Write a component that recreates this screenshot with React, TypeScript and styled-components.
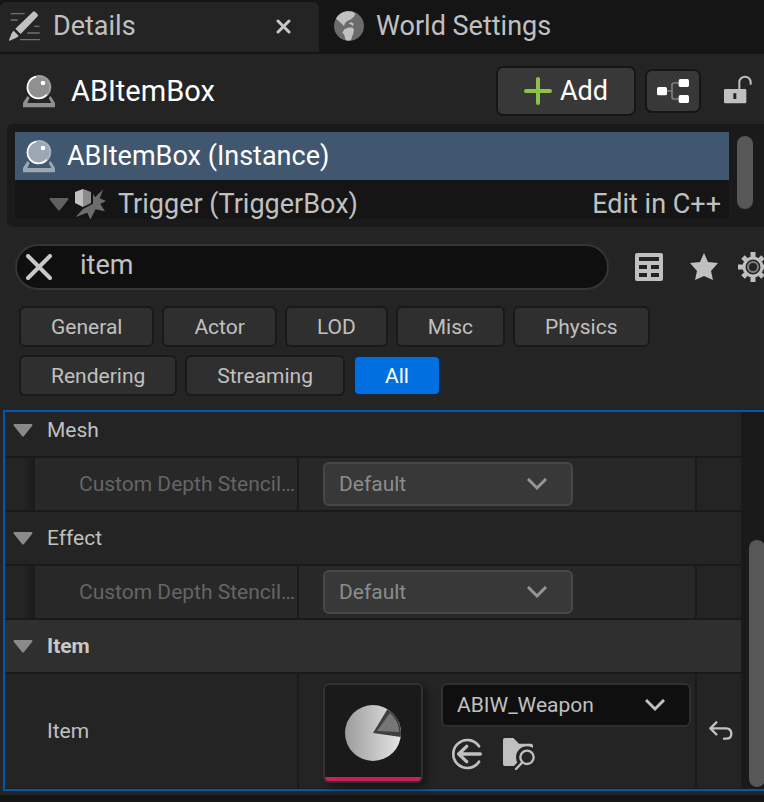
import React, { useState } from "react";
import styled, { createGlobalStyle } from "styled-components";

const GlobalStyle = createGlobalStyle`
  *, *::before, *::after { box-sizing: border-box; }
  body { margin: 0; background: #151515; overflow: hidden; }
  button, input, select { font: inherit; color: inherit; margin: 0; }
  svg { display: block; flex: none; }
`;

const Page = styled.div`
  min-height: 100vh;
  background: #151515;
  color: #c0c0c0;
  font-family: Roboto, "Liberation Sans", sans-serif;
  font-size: 27px;
  line-height: 32px;
`;

const TabBar = styled.nav`
  display: flex;
  height: 54px;
  padding: 2px 0;
`;

const Tab = styled.div<{ $active?: boolean }>`
  display: flex;
  align-items: center;
  width: ${(p) => (p.$active ? "319px" : "auto")};
  padding: 0 28px 2px ${(p) => (p.$active ? "8px" : "14px")};
  border-radius: 6px 6px 0 0;
  background: ${(p) => (p.$active ? "#242424" : "transparent")};
`;

const PlainButton = styled.button`
  display: flex;
  align-items: center;
  padding: 0;
  border: 0;
  background: none;
  cursor: pointer;
`;

const TabButton = styled(PlainButton)`
  flex: 1;
  gap: 11px;
  white-space: nowrap;
`;

const Body = styled.main`
  background: #242424;
  padding-bottom: 4px;
`;

const Header = styled.header`
  display: flex;
  align-items: center;
  height: 70px;
  padding: 4px 11px 0 22px;
`;

const Title = styled.h1`
  flex: 1;
  margin: 0 0 0 15px;
  font-size: 29px;
  font-weight: 400;
  color: #fff;
`;

const ToolButton = styled(PlainButton)<{ $wide?: boolean }>`
  justify-content: center;
  gap: 8px;
  width: ${(p) => (p.$wide ? "140px" : "56px")};
  height: ${(p) => (p.$wide ? "50px" : "44px")};
  margin-right: ${(p) => (p.$wide ? "9px" : "22px")};
  border: 2px solid #161616;
  border-radius: 7px;
  background: #383838;
  color: #fff;
`;

const TreePanel = styled.section`
  display: flex;
  height: 103px;
  margin-left: 7px;
  padding: 8px 11px 8px 8px;
  border-radius: 6px 0 0 6px;
  background: #1a1a1a;
`;

const TreeRows = styled.div`
  flex: 1;
  overflow: hidden;
  background: #151515;
`;

const TreeRow = styled.div<{ $selected?: boolean }>`
  display: flex;
  align-items: center;
  height: 48px;
  padding: 0 8px 0 ${(p) => (p.$selected ? "7px" : "34px")};
  background: ${(p) => (p.$selected ? "#40576f" : "transparent")};
  color: ${(p) => (p.$selected ? "#fff" : "#c0c0c0")};
`;

const TreeName = styled.span`
  flex: 1;
  margin-left: 11px;
`;

const TreeIcon = styled.span`
  margin-left: 5px;
`;

const TreeLink = styled.a`
  color: #c0c0c0;
  text-decoration: none;
`;

const TreeThumb = styled.div`
  width: 16px;
  height: 73px;
  margin: 4px 0 0 8px;
  border-radius: 8px;
  background: #575757;
`;

const SearchRow = styled.div`
  display: flex;
  align-items: center;
  padding: 17px 0 0 15px;
  overflow: hidden;
`;

const SearchBox = styled.div`
  display: flex;
  flex: 1;
  align-items: center;
  height: 46px;
  margin-right: 26px;
  padding: 0 24px 0 9px;
  border: 2px solid #353535;
  border-radius: 23px;
  background: #0f0f0f;
`;

const SearchInput = styled.input`
  flex: 1;
  min-width: 0;
  height: 36px;
  margin: 0 0 4px 28px;
  padding: 0;
  border: 0;
  outline: 0;
  background: none;
`;

const SearchTools = styled.div`
  display: grid;
  grid-template-columns: 54px 48px 32px;
  align-items: center;
  margin-right: -5px;
`;

const Chips = styled.div`
  display: flex;
  flex-wrap: wrap;
  gap: 8px;
  padding: 16px 100px 14px 19px;
`;

const Chip = styled.button<{ $on: boolean }>`
  height: 41px;
  padding: 0 30px;
  border: 2px solid ${(p) => (p.$on ? "#17253a" : "#191919")};
  border-radius: 6px;
  background: ${(p) => (p.$on ? "#0070e0" : "#2f2f2f")};
  color: ${(p) => (p.$on ? "#fff" : "#c0c0c0")};
  font-size: 21px;
  line-height: 24px;
  cursor: pointer;
`;

const DetailsFrame = styled.section`
  display: flex;
  margin-left: 3px;
  border: 2px solid #0457ae;
  border-right: 0;
  background: #1a1a1a;
  font-size: 21px;
  line-height: 24px;
`;

const Rows = styled.div`
  display: flex;
  flex: 1;
  flex-direction: column;
  gap: 2px;
  min-width: 0;
  padding-bottom: 1px;
`;

const ScrollTrack = styled.div`
  display: flex;
  flex-direction: column;
  justify-content: flex-end;
  width: 23px;
  padding: 0 0 2px 8px;
  overflow: hidden;
`;

const ScrollThumb = styled.div`
  width: 16px;
  height: 66%;
  border-radius: 8px;
  background: #575757;
`;

const Category = styled.button<{ $strong?: boolean; $first?: boolean }>`
  display: flex;
  align-items: center;
  gap: 14px;
  height: ${(p) => (p.$first ? "44px" : "52px")};
  padding: 0 8px ${(p) => (p.$first ? "8px" : "0")};
  border: 0;
  background: ${(p) => (p.$strong ? "#2f2f2f" : "#242424")};
  color: ${(p) => (p.$strong ? "#c8c8c8" : "#c0c0c0")};
  font-weight: ${(p) => (p.$strong ? 700 : 400)};
  text-align: left;
  cursor: pointer;
`;

const Property = styled.div<{ $nested?: boolean }>`
  display: grid;
  grid-template-columns: ${(p) => (p.$nested ? "30px 264px" : "294px")} minmax(0, 1fr) 44px;
  min-height: ${(p) => (p.$nested ? "52px" : "114px")};
`;

const Indent = styled.div`
  background: linear-gradient(to right, #242424 60%, #1a1a1a);
`;

const Cell = styled.div<{ $tone?: string }>`
  display: flex;
  align-items: center;
  min-width: 0;
  background: ${(p) => p.$tone ?? "#242424"};
  margin-right: 2px;
  &:last-child { margin-right: 0; padding-left: 4px; justify-content: center; }
`;

const PropertyLabel = styled.label<{ $dim?: boolean }>`
  padding-left: ${(p) => (p.$dim ? "44px" : "42px")};
  color: ${(p) => (p.$dim ? "#656565" : "#c0c0c0")};
  white-space: nowrap;
`;

const Value = styled(Cell)`
  padding: 0 5px 0 24px;
`;

const AssetValue = styled(Value)`
  align-items: flex-start;
  gap: 18px;
  padding-top: 9px;
`;

const Combo = styled.div`
  position: relative;
  width: 250px;
  svg { position: absolute; top: 16px; right: 26px; pointer-events: none; }
`;

const Select = styled.select<{ $dark?: boolean }>`
  display: block;
  width: 100%;
  height: 44px;
  padding: 0 48px 0 14px;
  border: 2px solid ${(p) => (p.$dark ? "#303030" : "#474747")};
  border-radius: 6px;
  background: ${(p) => (p.$dark ? "#0f0f0f" : "#383838")};
  color: ${(p) => (p.$dark ? "#c0c0c0" : "#8c8c8c")};
  opacity: 1;
  appearance: none;
`;

const Thumbnail = styled.div`
  display: flex;
  flex: none;
  align-items: center;
  justify-content: center;
  width: 100px;
  height: 100px;
  border: 2px solid #303030;
  border-radius: 6px;
  background: linear-gradient(to top, #cc1f57 4px, #1a1a1a 4px);
  box-shadow: 4px 4px 6px #151515;
`;

const AssetColumn = styled.div`
  display: flex;
  flex: 1;
  flex-direction: column;
  gap: 10px;
  max-width: 250px;
`;

const AssetActions = styled.div`
  display: flex;
  gap: 19px;
  padding-left: 10px;
`;

const Ball = ({ light }: { light?: boolean }) => (
  <svg width="34" height="34" viewBox="66 222 102 102">
    <path
      fill={light ? "#9ba7b3" : "#909090"}
      fillRule="evenodd"
      d="M82 288 69 309v13h96v-13l-13-21-6 6 8 15H82l7-15z"
    />
    <circle cx="118" cy="261" r="36" fill={light ? "#9ba7b3" : "#909090"} />
    <circle cx="117" cy="261" r="33" fill="none" stroke={light ? "#c2cad2" : "#b8b8b8"} strokeWidth="2" />
    <path d="M108 230A33 33 0 1 0 140 284" fill="none" stroke="#fff" strokeWidth="5" />
    <circle cx="129" cy="249" r="7" fill="#fff" />
  </svg>
);

const PencilIcon = () => (
  <svg width="34" height="34" viewBox="24 24 102 102">
    <path d="M32 38h42M32 57h21M103 76h15M82 96h37M60 116h60" stroke="#707070" strokeWidth="4" />
    <path
      fill="#c0c0c0"
      d="M99 32q3-3 6 0l8 8q2 3 0 6L62 99 46 83zM41 89l15 15q-3 4-7 6l-20 9q-3 1-2-2l8-20q2-4 6-8z"
    />
  </svg>
);

const GlobeIcon = () => (
  <svg width="32" height="32" viewBox="999 27 96 96">
    <circle cx="1047" cy="75" r="45" fill="#6b6b6b" />
    <path
      fill="#c0c0c0"
      d="M1008 53c7-14 22-22 38-22 11 0 17 4 20 8l-5 9-8 7q-5 4-11 5l-7 7-3 8-10-10zM1033 85l11-5 13-1 5 7-2 11-7 20q-9 3-16 0l-4-15-6-7z"
    />
    <path fill="#c0c0c0" d="M1053 63l8 5-2 8-4-5-9-3z" />
  </svg>
);

const Cross = ({ size, weight }: { size: number; weight: number }) => (
  <svg width={size} height={size} viewBox={`0 0 ${size} ${size}`}>
    <path
      d={`M2 2 ${size - 2} ${size - 2}M${size - 2} 2 2 ${size - 2}`}
      stroke="#c8c8c8"
      strokeWidth={weight}
      strokeLinecap="round"
    />
  </svg>
);

const PlusIcon = () => (
  <svg width="28" height="28" viewBox="0 0 28 28">
    <path d="M14 2v24M2 14h24" stroke="#8bc34a" strokeWidth="4" strokeLinecap="round" />
  </svg>
);

const NodesIcon = () => (
  <svg width="34" height="26" viewBox="822 234 102 78">
    <path d="M855 273h15M892 249h-16q-6 0-6 6v36q0 6 6 6h16" fill="none" stroke="#808080" strokeWidth="5" />
    <g fill="#fff">
      <rect x="825" y="261" width="30" height="25" rx="5" />
      <rect x="890" y="237" width="31" height="24" rx="5" />
      <rect x="890" y="285" width="31" height="24" rx="5" />
    </g>
  </svg>
);

const UnlockIcon = () => (
  <svg width="30" height="34" viewBox="1026 222 90 102">
    <path
      fill="#c0c0c0"
      fillRule="evenodd"
      d="M1033 267h59q4 0 4 4v35q0 4-4 4h-59q-4 0-4-4v-35q0-4 4-4zM1057 280v17h9v-17z"
    />
    <path d="M1075 268v-21a17 17 0 0 1 34 0v7" fill="none" stroke="#c0c0c0" strokeWidth="6" />
  </svg>
);

const TriggerIcon = () => (
  <svg width="33" height="33" viewBox="222 202 99 99">
    <path
      fill="#6c6c6c"
      d="M279 219v30l-30 16-22 24 35-13 9 21 16-31 28 6-14-22 17-9-19-8 11-27-25 24z"
    />
    <path fill="#c0c0c0" d="M225 214l24-9v54l-24-12z" />
    <path fill="#8c8c8c" d="M249 205l24 9v33l-24 12z" />
  </svg>
);

const Arrow = ({ color = "#8a8a8a" }: { color?: string }) => (
  <svg width="20" height="13" viewBox="0 0 20 13">
    <path d="M1 0h18q1 1 0 2l-8 10q-1 1-2 0L1 2q-1-1 0-2z" fill={color} />
  </svg>
);

const TableIcon = () => (
  <svg width="28" height="28" viewBox="0 0 28 28">
    <path
      fill="#c0c0c0"
      fillRule="evenodd"
      d="M2 0h24q2 0 2 2v24q0 2-2 2H2q-2 0-2-2V2q0-2 2-2zM4 4v4h20V4zM4 12v4h8v-4zM16 12v4h8v-4zM4 20v4h8v-4zM16 20v4h8v-4z"
    />
  </svg>
);

const StarIcon = () => (
  <svg width="30" height="28" viewBox="0 0 30 28">
    <path fill="#c0c0c0" d="M15 0l4 9 10 1-7 8 2 9-9-4-9 4 2-9-7-8 10-1z" />
  </svg>
);

const GearIcon = () => (
  <svg width="32" height="32" viewBox="-16 -16 32 32">
    <path
      d="M0-10v-5M0 10v5M-10 0h-5M10 0h5M-7-7l-3-3M7 7l3 3M7-7l3-3M-7 7l-3 3"
      stroke="#c0c0c0"
      strokeWidth="5"
    />
    <circle r="9" fill="none" stroke="#c0c0c0" strokeWidth="3" />
    <circle r="5" fill="none" stroke="#808080" strokeWidth="2" />
  </svg>
);

const Chevron = ({ color }: { color: string }) => (
  <svg width="20" height="13" viewBox="0 0 20 13">
    <path d="M2 2l8 8 8-8" fill="none" stroke={color} strokeWidth="3" strokeLinecap="square" />
  </svg>
);

const PieIcon = () => (
  <svg width="58" height="58" viewBox="-29 -29 58 58">
    <defs>
      <linearGradient id="pie" x1="0" x2="1">
        <stop offset="0" stopColor="#9c9c9c" />
        <stop offset="1" stopColor="#e6e6e6" />
      </linearGradient>
    </defs>
    <circle r="28" fill="url(#pie)" />
    <path d="M0 0 14.5-24A28 28 0 0 1 27.7 4z" fill="#404040" />
    <path d="M4-2 17-20Q26-12 26-1z" fill="#767676" />
  </svg>
);

const UseIcon = () => (
  <svg width="32" height="34" viewBox="453 213 96 102">
    <g fill="none" stroke="#c0c0c0" strokeLinecap="round">
      <path d="M537 241A42 42 0 1 0 537 287" strokeWidth="8" />
      <path d="M541 264h-62M500 241l-24 23 24 23" strokeWidth="10" strokeLinejoin="round" />
    </g>
  </svg>
);

const BrowseIcon = () => (
  <svg width="34" height="34" viewBox="606 213 102 102">
    <path fill="#c0c0c0" d="M615 216h25l17 17h36q6 0 6 6v61h-84q-6 0-6-6v-72q0-6 6-6z" />
    <path d="M701 244v60h-58v10h65v-70z" fill="#242424" />
    <circle cx="681" cy="274" r="33" fill="#242424" />
    <path d="M672 283l-25 26" stroke="#242424" strokeWidth="20" />
    <circle cx="681" cy="274" r="20" fill="none" stroke="#c0c0c0" strokeWidth="7" />
    <path d="M666 290l-18 19" stroke="#c0c0c0" strokeWidth="7" strokeLinecap="round" />
  </svg>
);

const ResetIcon = () => (
  <svg width="24" height="20" viewBox="508 169 72 60">
    <path
      d="M530 173l-18 18 18 18M513 191h46q16 1 16 16 0 15-16 15h-6"
      fill="none"
      stroke="#c0c0c0"
      strokeWidth="7"
      strokeLinecap="round"
      strokeLinejoin="round"
    />
  </svg>
);

const sections = ["General", "Actor", "LOD", "Misc", "Physics", "Rendering", "Streaming", "All"];

const StencilProperty = ({ id }: { id: string }) => (
  <Property $nested>
    <Indent />
    <Cell $tone="#282828">
      <PropertyLabel htmlFor={id} $dim>
        Custom Depth Stencil…
      </PropertyLabel>
    </Cell>
    <Value $tone="#282828">
      <Combo>
        <Select id={id} disabled>
          <option>Default</option>
        </Select>
        <Chevron color="#969696" />
      </Combo>
    </Value>
    <Cell />
  </Property>
);

export default function App() {
  const [section, setSection] = useState("All");
  const [query, setQuery] = useState("item");

  return (
    <Page>
      <GlobalStyle />
      <TabBar aria-label="Panels">
        <Tab $active>
          <TabButton>
            <PencilIcon />
            Details
          </TabButton>
          <PlainButton aria-label="Close Details">
            <Cross size={15} weight={3} />
          </PlainButton>
        </Tab>
        <Tab>
          <TabButton>
            <GlobeIcon />
            World Settings
          </TabButton>
        </Tab>
      </TabBar>
      <Body>
        <Header>
          <Ball />
          <Title>ABItemBox</Title>
          <ToolButton $wide>
            <PlusIcon />
            Add
          </ToolButton>
          <ToolButton aria-label="Edit blueprint">
            <NodesIcon />
          </ToolButton>
          <PlainButton aria-label="Lock details">
            <UnlockIcon />
          </PlainButton>
        </Header>
        <TreePanel>
          <TreeRows>
            <TreeRow $selected>
              <Ball light />
              <TreeName>ABItemBox (Instance)</TreeName>
            </TreeRow>
            <TreeRow>
              <Arrow color="#606060" />
              <TreeIcon>
                <TriggerIcon />
              </TreeIcon>
              <TreeName>Trigger (TriggerBox)</TreeName>
              <TreeLink href="#edit">Edit in C++</TreeLink>
            </TreeRow>
          </TreeRows>
          <TreeThumb />
        </TreePanel>
        <SearchRow>
          <SearchBox>
            <PlainButton aria-label="Clear search" onClick={() => setQuery("")}>
              <Cross size={26} weight={4} />
            </PlainButton>
            <SearchInput aria-label="Search details" value={query} onChange={(e) => setQuery(e.target.value)} />
          </SearchBox>
          <SearchTools>
            <PlainButton aria-label="Property matrix">
              <TableIcon />
            </PlainButton>
            <PlainButton aria-label="Favorites">
              <StarIcon />
            </PlainButton>
            <PlainButton aria-label="View options">
              <GearIcon />
            </PlainButton>
          </SearchTools>
        </SearchRow>
        <Chips>
          {sections.map((name) => (
            <Chip key={name} $on={name === section} aria-pressed={name === section} onClick={() => setSection(name)}>
              {name}
            </Chip>
          ))}
        </Chips>
        <DetailsFrame>
          <Rows>
            <Category $first>
              <Arrow />
              Mesh
            </Category>
            <StencilProperty id="mesh-stencil" />
            <Category>
              <Arrow />
              Effect
            </Category>
            <StencilProperty id="effect-stencil" />
            <Category $strong>
              <Arrow />
              Item
            </Category>
            <Property>
              <Cell>
                <PropertyLabel htmlFor="item-asset">Item</PropertyLabel>
              </Cell>
              <AssetValue>
                <Thumbnail>
                  <PieIcon />
                </Thumbnail>
                <AssetColumn>
                  <Combo>
                    <Select id="item-asset" $dark>
                      <option>ABIW_Weapon</option>
                    </Select>
                    <Chevron color="#c0c0c0" />
                  </Combo>
                  <AssetActions>
                    <PlainButton aria-label="Use selected asset">
                      <UseIcon />
                    </PlainButton>
                    <PlainButton aria-label="Browse to asset">
                      <BrowseIcon />
                    </PlainButton>
                  </AssetActions>
                </AssetColumn>
              </AssetValue>
              <Cell>
                <PlainButton aria-label="Reset to default">
                  <ResetIcon />
                </PlainButton>
              </Cell>
            </Property>
          </Rows>
          <ScrollTrack>
            <ScrollThumb />
          </ScrollTrack>
        </DetailsFrame>
      </Body>
    </Page>
  );
}
